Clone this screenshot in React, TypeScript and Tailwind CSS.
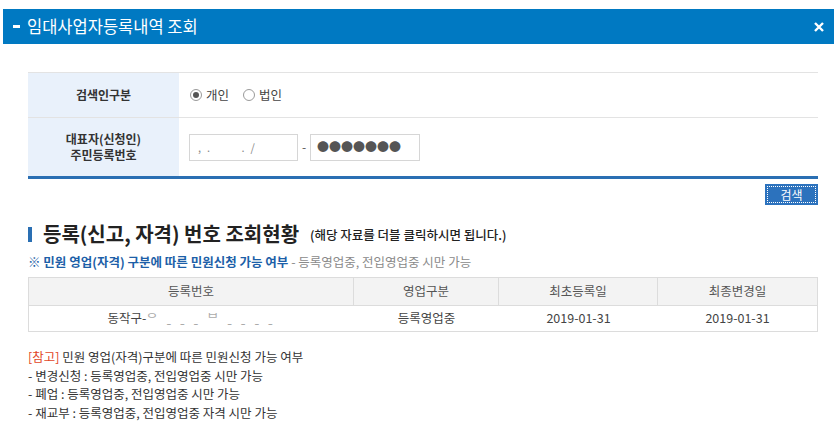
import React from 'react';

const font = "font-['Noto_Sans_CJK_KR','Noto_Sans',sans-serif]";

const Radio = ({ checked, label }: { checked: boolean; label: string }) => (
  <label className="flex items-center gap-[4px] text-[12.5px] text-[#444]">
    <span className="w-[12px] h-[12px] rounded-full border border-[#9a9a9a] bg-white flex items-center justify-center">
      {checked && <span className="w-[6px] h-[6px] rounded-full bg-[#555]" />}
    </span>
    {label}
  </label>
);

const columns = [
  { title: '등록번호', w: 'w-[325px]' },
  { title: '영업구분', w: 'w-[145px]' },
  { title: '최초등록일', w: 'w-[159px]' },
  { title: '최종변경일', w: 'flex-1' },
];

const notes = [
  '- 변경신청 : 등록영업중, 전입영업중 시만 가능',
  '- 폐업 : 등록영업중, 전입영업중 시만 가능',
  '- 재교부 : 등록영업중, 전입영업중 자격 시만 가능',
];

export default function App() {
  return (
    <div className={`w-[840px] h-[441px] bg-white overflow-hidden ${font}`}>
      <div className="pt-[9px] pl-[3px] pr-[6px]">
        <div className="h-[35px] bg-[#0079c2] flex items-center justify-between pl-[10px] pr-[10px]">
          <div className="flex items-center gap-[7px]">
            <span className="w-[7px] h-[3px] bg-white" />
            <span className="text-white text-[16.5px] leading-none">임대사업자등록내역 조회</span>
          </div>
          <svg width="10" height="10" viewBox="0 0 10 10">
            <path d="M1 1L9 9M9 1L1 9" stroke="white" strokeWidth="2.4" />
          </svg>
        </div>
      </div>

      <div className="ml-[28px] w-[790px]">
        {/* search form */}
        <div className="mt-[28px] border-t border-[#e3e3e3] border-b-[3px] border-b-[#2a6fb3]">
          <div className="flex h-[45px] border-b border-[#e3e3e3]">
            <div className="w-[151px] bg-[#e9f1fb] flex items-center justify-center text-[12px] font-bold text-[#333]">
              검색인구분
            </div>
            <div className="flex items-center gap-[14px] pl-[11px]">
              <Radio checked label="개인" />
              <Radio checked={false} label="법인" />
            </div>
          </div>
          <div className="flex h-[58px]">
            <div className="w-[151px] bg-[#e9f1fb] flex flex-col items-center justify-center text-[12px] font-bold text-[#333] leading-[16px]">
              <span>대표자(신청인)</span>
              <span>주민등록번호</span>
            </div>
            <div className="flex items-center pl-[10px]">
              <div className="w-[109px] h-[27px] border border-[#d6d6d6] flex items-center pl-[8px] text-[11px] text-[#888] tracking-[6px]">
                ,.&nbsp;&nbsp;&nbsp;./
              </div>
              <span className="w-[12px] text-center text-[12px] text-[#555]">-</span>
              <div className="w-[110px] h-[27px] border border-[#d6d6d6] flex items-center pl-[6px] text-[12px] text-[#555]">
                ●●●●●●●
              </div>
            </div>
          </div>
        </div>

        <div className="flex justify-end mt-[5px]">
          <button className="w-[53px] h-[21px] bg-[#2c72bd] p-[2px]">
            <span className="flex items-center justify-center w-full h-full border border-dotted border-white text-white text-[12px]">
              검색
            </span>
          </button>
        </div>

        {/* result section */}
        <div className="flex items-center mt-[19px] h-[20px]">
          <span className="w-[4px] h-[15px] bg-[#2a6fb3]" />
          <span className="ml-[11px] text-[20px] font-bold text-[#222]">등록(신고, 자격) 번호 조회현황</span>
          <span className="ml-[11px] text-[12.5px] font-medium text-[#222] mt-[2px]">(해당 자료를 더블 클릭하시면 됩니다.)</span>
        </div>
        <div className="mt-[9px] text-[12.5px] leading-[18px]">
          <span className="font-bold text-[#1d5fa8]">※ 민원 영업(자격) 구분에 따른 민원신청 가능 여부</span>
          <span className="text-[#8a8a8a]"> - 등록영업중, 전입영업중 시만 가능</span>
        </div>

        <div className="mt-[6px] border border-[#dcdcdc]">
          <div className="flex h-[28px] bg-[#f3f3f3] border-b border-[#dcdcdc]">
            {columns.map((c, i) => (
              <div
                key={c.title}
                className={`${c.w} flex items-center justify-center text-[12.5px] text-[#555] ${i < 3 ? 'border-r border-[#dcdcdc]' : ''}`}
              >
                {c.title}
              </div>
            ))}
          </div>
          <div className="flex h-[25px] text-[12.5px] text-[#444]">
            <div className="w-[325px] flex items-center justify-center">
              동작구-<span className="text-[#aaa] tracking-[3px]">ᄋ ˍ ˍ ˍ ᄇ ˍ ˍ ˍ ˍ</span>
            </div>
            <div className="w-[145px] flex items-center justify-center">등록영업중</div>
            <div className="w-[159px] flex items-center justify-center">2019-01-31</div>
            <div className="flex-1 flex items-center justify-center">2019-01-31</div>
          </div>
        </div>

        <div className="mt-[16px] text-[12.5px] text-[#333] leading-[18.7px]">
          <div>
            <span className="text-[#e2461f]">[참고]</span> 민원 영업(자격)구분에 따른 민원신청 가능 여부
          </div>
          {notes.map((n) => (
            <div key={n}>{n}</div>
          ))}
        </div>
      </div>
    </div>
  );
}
